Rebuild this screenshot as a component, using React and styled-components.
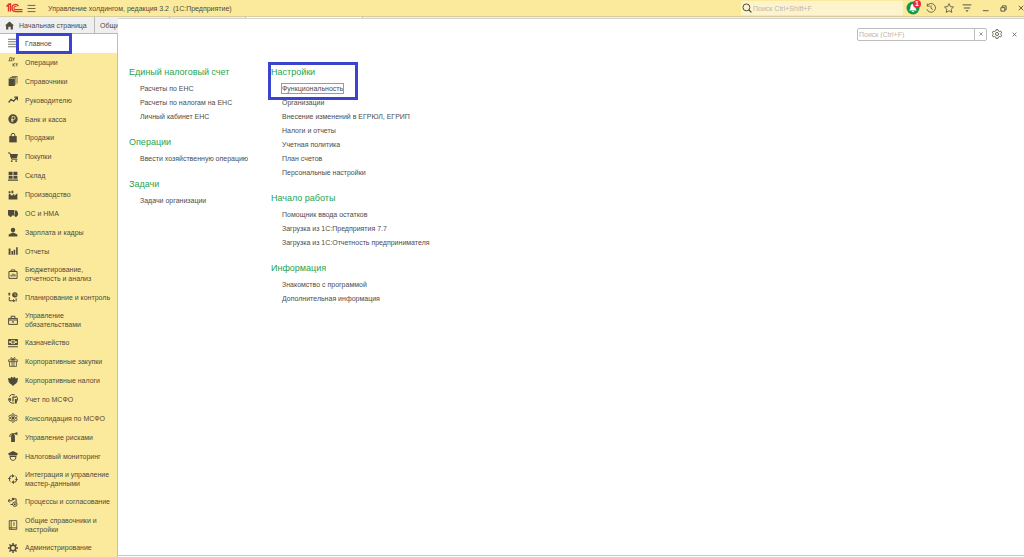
import React, { useState } from 'react';
import styled, { createGlobalStyle, css } from 'styled-components';

const GlobalStyle = createGlobalStyle`
	* {
		box-sizing: border-box;
	}
	body {
		margin: 0;
		background: #fff;
		color: #4f4a3c;
		font-family: "Liberation Sans", Arial, sans-serif;
		font-size: 7px;
		line-height: 9px;
	}
	button,
	input {
		font: inherit;
		color: inherit;
		border: 0;
		margin: 0;
		padding: 0;
		background: none;
	}
	button {
		cursor: pointer;
	}
	ul {
		list-style: none;
		margin: 0;
		padding: 0;
	}
`;

const Page = styled.div`
	display: grid;
	grid-template-columns: 118px 1fr;
	grid-template-rows: 17px 17px 1fr;
	min-height: 100vh;
`;

const TitleBar = styled.header`
	grid-column: 1 / -1;
	display: flex;
	align-items: center;
	padding-left: 6px;
	background: #fbea9b;
	border-bottom: 1px solid #d9cf9e;
`;

const Title = styled.h1`
	flex: 1;
	margin: 0 0 0 8px;
	font-size: 7px;
	font-weight: 400;
	white-space: pre;
`;

const GlobalSearch = styled.label`
	display: flex;
	align-items: center;
	width: 162px;
	height: 14px;
	padding-left: 1px;
	margin-right: 1px;
	background: #fdf4cd;
	border-radius: 1px;
`;

const SearchInput = styled.input`
	flex: 1;
	min-width: 0;
	height: 100%;
	padding-left: 1px;
	outline: none;
	&::placeholder {
		color: #b9b7ae;
		opacity: 1;
	}
`;

const IconButton = styled.button`
	position: relative;
	display: flex;
	align-items: center;
	justify-content: ${props => (props.$end ? 'flex-end' : 'center')};
	width: ${props => props.$width || 18}px;
	height: 16px;
	color: #5b5748;
`;

const Badge = styled.span`
	position: absolute;
	top: 0;
	right: 1px;
	width: 8px;
	height: 8px;
	border-radius: 50%;
	background: #ee2a2f;
	color: #fff;
	font-size: 7px;
	font-weight: 700;
	line-height: 8px;
	text-align: center;
`;

const Tabs = styled.nav`
	grid-column: 1 / -1;
	grid-row: 2;
	display: flex;
	background: #efefef;
	border-bottom: 1px solid #b9b9b9;
`;

const Tab = styled.button`
	display: flex;
	align-items: center;
	gap: 5px;
	flex: none;
	width: ${props => props.$width}px;
	padding-left: 5px;
	border-right: 1px solid #b9b9b9;
	background: ${props => (props.$active ? '#fff' : 'none')};
	white-space: nowrap;
	overflow: hidden;
`;

const Sidebar = styled.ul`
	grid-column: 1;
	grid-row: 3;
	display: flex;
	flex-direction: column;
	background: #fbea9b;
	border-right: 1px solid #c9c19a;
`;

const SidebarItem = styled.li`
	position: relative;
	flex: 1 0 auto;
	display: flex;
	background: ${props => (props.$active ? '#fff' : 'none')};
`;

const SidebarButton = styled.button`
	flex: 1;
	display: flex;
	align-items: center;
	gap: 7px;
	padding-left: 8px;
	text-align: left;
	white-space: pre;
`;

const Panel = styled.main`
	grid-column: 2;
	grid-row: 2 / 4;
	z-index: 1;
	margin: 1px 0;
	background: #fff;
	border-top: 1px solid #d4d4d4;
	border-bottom: 1px solid #c8c8c8;
`;

const PanelHeader = styled.div`
	display: flex;
	justify-content: flex-end;
	align-items: center;
	padding: 7px 2px 0 0;
`;

const PanelSearch = styled.div`
	display: flex;
	width: 130px;
	height: 13px;
	margin-right: 1px;
	border: 1px solid #bdbdbd;
	border-radius: 2px;
`;

const ClearButton = styled.button`
	display: flex;
	align-items: center;
	justify-content: center;
	width: 12px;
	border-left: 1px solid #bdbdbd;
	color: #555;
`;

const Columns = styled.div`
	display: grid;
	grid-template-columns: 120px 1fr;
	column-gap: 22px;
	padding: 20px 11px 0;
`;

const Section = styled.section`
	position: relative;
	padding-top: 2px;
	margin-bottom: 9px;
`;

const SectionTitle = styled.h2`
	margin: 0;
	font-size: 9px;
	font-weight: 400;
	line-height: 17px;
	color: #1fa351;
`;

const LinkRow = styled.li`
	display: flex;
	align-items: center;
	height: 14px;
	padding-left: 10px;
`;

const SectionLink = styled.a`
	padding: 1px;
	color: #4c4c4c;
	text-decoration: none;
	white-space: nowrap;
	${props =>
		props.$focused &&
		css`
			outline: 1px solid #9a9a9a;
			outline-offset: -1px;
		`};
`;

const Highlight = styled.span`
	position: absolute;
	border: 3px solid #3c44cf;
	pointer-events: none;
	${props =>
		props.$area === 'menu'
			? 'top: -1px; bottom: -1px; left: 16px; width: 56px;'
			: 'top: 0; left: -3px; width: 90px; height: 38px;'};
`;

const Svg = ({ size = 10, children, ...rest }) => (
	<svg
		width={size}
		height={size}
		viewBox="0 0 16 16"
		fill="none"
		stroke="currentColor"
		strokeWidth="1.6"
		aria-hidden="true"
		{...rest}
	>
		{children}
	</svg>
);

const solid = { fill: 'currentColor', stroke: 'none' };

const icons = {
	list: <path d="M0 2h16M0 6h16M0 10h16M0 14h16" strokeWidth="1.2" />,
	debit: (
		<path d="M1 6h6M2 6l1-5h3v5M7 2h4M9 2v4M8 10v5M11.500 10L8 12.500l3.500 2.500M12 11h4M14 11v4" strokeWidth="1.2" />
	),
	books: (
		<g {...solid}>
			<path d="M1 4h10v12H1z" />
			<path d="M3 2h10v12h-1V3H3zM6 0h9v12h-1V1H6z" />
		</g>
	),
	trend: <path d="M1 12l4-5 4 3 5-6M10 3.500h5v5" strokeWidth="2" />,
	ruble: (
		<g>
			<circle cx="8" cy="8" r="7.500" {...solid} />
			<path d="M6.500 13V4h2.500a2.300 2.300 0 0 1 0 4.800H5M5 11h4" stroke="#fbea9b" strokeWidth="1.300" />
		</g>
	),
	bag: (
		<g>
			<path d="M2 5h12v10H2z" {...solid} />
			<path d="M5 8V3.500a3 3 0 0 1 6 0V8" />
		</g>
	),
	cart: (
		<g>
			<path d="M3 3h13l-2 7H5z" {...solid} />
			<path d="M0 1.500h3l3 10h9" />
			<circle cx="6" cy="14.500" r="1.500" {...solid} />
			<circle cx="13" cy="14.500" r="1.500" {...solid} />
		</g>
	),
	store: <path d="M1 1h6.300v5.500H1zM8.700 1h6.300v5.500H8.700zM1 7.500h6.300v5H1zM8.700 7.500h6.300v5H8.700zM0 13.500h16v2H0z" {...solid} />,
	factory: (
		<path d="M1 15V7l2-1 3 3 4-3v3l5-4v10zM1 2h3v3H1zM5.500 1h3v4h-3z" {...solid} />
	),
	truck: (
		<g {...solid}>
			<path d="M0 3h10v9H0zM11 4h3l2 3.500V12h-5z" />
			<circle cx="4" cy="12" r="2.200" />
			<circle cx="12.500" cy="12" r="2.200" />
		</g>
	),
	person: (
		<g {...solid}>
			<path d="M8 1a3.500 3.500 0 0 1 3.500 3.500C11.500 7 10 9 8 9S4.500 7 4.500 4.500A3.500 3.500 0 0 1 8 1z" />
			<path d="M1 15v-3l5-2.500h4l5 2.500v3z" />
		</g>
	),
	bars: <path d="M1 4h3v10H1zM5.500 8h2.500v6H5.500zM9 6h2.500v8H9zM13 2h2.500v12H13z" {...solid} />,
	budget: (
		<g>
			<path d="M1.500 4h13v11h-13zM5 4V1.500h6V4" />
			<path d="M5 12V9M8 12V7M11 12V8.500" strokeWidth="1.800" />
		</g>
	),
	plan: (
		<g>
			<path d="M2 1v5M0 3h4M2 8v6h8M8 12l3 2-3 2M13 10v5" />
			<circle cx="11" cy="4.500" r="4.300" {...solid} />
			<path d="M11 2v3h2.500" stroke="#fbea9b" strokeWidth="1" />
		</g>
	),
	briefcase: (
		<g>
			<path d="M1 5.500h14v9.500H1zM5 5V2h6v3M1 8h14" />
			<path d="M6.500 10h3v2h-3z" {...solid} />
		</g>
	),
	money: (
		<g>
			<path d="M1 2.500h14v8H1zM0 14h16" />
			<path d="M1 2h4v3H1zM11 2h4v3h-4zM1 8h4v3H1zM11 8h4v3h-4z" {...solid} />
			<circle cx="8" cy="6.500" r="1.800" />
		</g>
	),
	gift: (
		<path d="M1 4.500h14v3H1zM2.500 7.500V15h11V7.500M6.500 4.500V15M9.500 4.500V15M8 4C3 4 4 0 6 1l2 3 2-3c2-1 3 3-2 3z" strokeWidth="1.300" />
	),
	eagle: (
		<path d="M0 3l4 1 1-3 2 1 1 2 1-2 2-1 1 3 4-1-1 6-2 3-2 1-3 3-3-3-2-1-2-3z" {...solid} />
	),
	globe: (
		<g>
			<path d="M2 4a7 7 0 0 1 9-2.500M1 7a7 7 0 0 0 9 7.500M13 3a7 7 0 0 1 0 10" />
			<path d="M7 4h6v2H9v6H7zM11 8h3v7h-3zM2 6l3 1v4l-3-1z" {...solid} />
		</g>
	),
	atom: (
		<g strokeWidth="1.300">
			<circle cx="8" cy="8" r="2" {...solid} />
			<circle cx="8" cy="3" r="2" />
			<circle cx="8" cy="13" r="2" />
			<circle cx="3.500" cy="5.500" r="2" />
			<circle cx="12.500" cy="5.500" r="2" />
			<circle cx="3.500" cy="10.500" r="2" />
			<circle cx="12.500" cy="10.500" r="2" />
		</g>
	),
	extinguisher: (
		<g>
			<path d="M5 5h6v11H5zM6 2h4v3H6zM10 2l5-2v5l-5-2z" {...solid} />
			<path d="M6 3C3 3 3 6 3 8" />
		</g>
	),
	officer: (
		<g>
			<path d="M0 4l8-4 8 4-2 3H2zM3 8h10v1.500H3z" {...solid} />
			<path d="M3.500 8v3c1 3 2.500 4 4.500 4s3.500-1 4.500-4V8" />
		</g>
	),
	sync: (
		<g>
			<path d="M7 3H5.500A3 3 0 0 0 2.500 6v4a3 3 0 0 0 1.500 2.500M9 13h1.500a3 3 0 0 0 3-3V6A3 3 0 0 0 12 3.500" />
			<path d="M6.500 0l4 3-4 3zM9.500 10l-4 3 4 3z" {...solid} />
			<path d="M0 8l2.500-2.500L5 8M11 8l2.500 2.500L16 8" strokeWidth="1.200" />
		</g>
	),
	process: (
		<g>
			<path d="M0 6h7M3 3L0 6l3 3M8 3h5v5M8 12H4" />
			<circle cx="8" cy="3" r="2" {...solid} />
			<circle cx="11" cy="11.500" r="3.500" />
			<circle cx="11" cy="11.500" r="1.500" {...solid} />
		</g>
	),
	catalog: <path d="M2 1h12v14H2zM5 1v14M8 5h3M8 8h3M2 12.500h12" strokeWidth="1.400" />,
	gear: (
		<g>
			<circle cx="8" cy="8" r="4.300" strokeWidth="2.400" />
			<path
				d="M8 0v3M8 13v3M0 8h3M13 8h3M2.300 2.300l2.200 2.200M11.500 11.500l2.200 2.200M2.300 13.700l2.200-2.200M11.500 4.500l2.200-2.200"
				strokeWidth="2.400"
			/>
		</g>
	)
};

const menu = [
	['list', 'Главное'],
	['debit', 'Операции'],
	['books', 'Справочники'],
	['trend', 'Руководителю'],
	['ruble', 'Банк и касса'],
	['bag', 'Продажи'],
	['cart', 'Покупки'],
	['store', 'Склад'],
	['factory', 'Производство'],
	['truck', 'ОС и НМА'],
	['person', 'Зарплата и кадры'],
	['bars', 'Отчеты'],
	['budget', 'Бюджетирование,\nотчетность и анализ'],
	['plan', 'Планирование и контроль'],
	['briefcase', 'Управление\nобязательствами'],
	['money', 'Казначейство'],
	['gift', 'Корпоративные закупки'],
	['eagle', 'Корпоративные налоги'],
	['globe', 'Учет по МСФО'],
	['atom', 'Консолидация по МСФО'],
	['extinguisher', 'Управление рисками'],
	['officer', 'Налоговый мониторинг'],
	['sync', 'Интеграция и управление\nмастер-данными'],
	['process', 'Процессы и согласование'],
	['catalog', 'Общие справочники и\nнастройки'],
	['gear', 'Администрирование']
];

const columns = [
	[
		{
			title: 'Единый налоговый счет',
			links: ['Расчеты по ЕНС', 'Расчеты по налогам на ЕНС', 'Личный кабинет ЕНС']
		},
		{ title: 'Операции', links: ['Ввести хозяйственную операцию'] },
		{ title: 'Задачи', links: ['Задачи организации'] }
	],
	[
		{
			title: 'Настройки',
			highlighted: true,
			links: [
				'Функциональность',
				'Организации',
				'Внесение изменений в ЕГРЮЛ, ЕГРИП',
				'Налоги и отчеты',
				'Учетная политика',
				'План счетов',
				'Персональные настройки'
			]
		},
		{
			title: 'Начало работы',
			links: [
				'Помощник ввода остатков',
				'Загрузка из 1С:Предприятия 7.7',
				'Загрузка из 1С:Отчетность предпринимателя'
			]
		},
		{
			title: 'Информация',
			links: ['Знакомство с программой', 'Дополнительная информация']
		}
	]
];

const Logo = () => (
	<svg width="17" height="10" viewBox="0 0 34 20" fill="none" stroke="#e0352b" aria-hidden="true">
		<path d="M1 7l4-4v14M5 3l4-1v15" strokeWidth="2.800" />
		<path d="M25 6.500A7 7 0 1 0 19 17h14" strokeWidth="2.800" />
		<path d="M21 8a3 3 0 1 0-2 5h14" strokeWidth="2.200" />
	</svg>
);

const Bell = () => (
	<svg width="14" height="14" viewBox="0 0 28 28" aria-hidden="true">
		<circle cx="14" cy="14" r="13" fill="#12994a" />
		<path d="M14 6c4 0 5 3 5 6 0 4 1 5 3 7H6c2-2 3-3 3-7 0-3 1-6 5-6zM11 20h6l-3 3z" fill="#fff" />
	</svg>
);

const CloseIcon = ({ size = 6 }) => (
	<Svg size={size}>
		<path d="M2 2l12 12M14 2L2 14" strokeWidth="2.500" />
	</Svg>
);

export default function App() {
	const [section, setSection] = useState('Главное');
	const [query, setQuery] = useState('');

	return (
		<Page>
			<GlobalStyle />
			<TitleBar>
				<Logo />
				<IconButton $width={17} aria-label="Меню">
					<Svg size={9}>
						<path d="M1 2.500h14M1 8h14M1 13.500h14" />
					</Svg>
				</IconButton>
				<Title>{'Управление холдингом, редакция 3.2  (1С:Предприятие)'}</Title>
				<GlobalSearch>
					<Svg>
						<circle cx="7" cy="7" r="5.500" />
						<path d="M11 11l4 4" strokeWidth="2.200" />
					</Svg>
					<SearchInput placeholder="Поиск Ctrl+Shift+F" aria-label="Поиск" />
				</GlobalSearch>
				<IconButton aria-label="Уведомления">
					<Bell />
					<Badge>1</Badge>
				</IconButton>
				<IconButton aria-label="История">
					<Svg>
						<path d="M2 4.500A7 7 0 1 1 1.500 10M2 1v4h4M8 4v4.500l3 2" strokeWidth="1.400" />
					</Svg>
				</IconButton>
				<IconButton aria-label="Избранное">
					<Svg>
						<path d="M8 1l2.200 4.800 5 .600-3.700 3.500 1 5.100L8 12.500 3.500 15l1-5.100L.800 6.400l5-.600z" strokeWidth="1.400" />
					</Svg>
				</IconButton>
				<IconButton aria-label="Сервис">
					<Svg>
						<path d="M1 3h14M3 8h10" />
						<path d="M5.500 11.500h5L8 14.500z" {...solid} />
					</Svg>
				</IconButton>
				<IconButton aria-label="Свернуть">
					<Svg size={7}>
						<path d="M2 13h13" strokeWidth="2.200" />
					</Svg>
				</IconButton>
				<IconButton aria-label="Восстановить">
					<Svg size={7}>
						<path d="M2 6h9v8H2zM5 5V2h9v9h-3" strokeWidth="2.200" />
					</Svg>
				</IconButton>
				<IconButton $width={12} $end aria-label="Закрыть">
					<CloseIcon />
				</IconButton>
			</TitleBar>

			<Tabs>
				<Tab $width={95}>
					<Svg size={9}>
						<path d="M8 1l8 7h-2v7h-4v-5H6v5H2V8H0z" {...solid} />
					</Svg>
					Начальная страница
				</Tab>
				<Tab $width={75}>Общие</Tab>
				<Tab $width={76} aria-label="Вкладка 3" />
				<Tab $width={117} $active aria-label="Вкладка 4" />
			</Tabs>

			<Sidebar>
				{menu.map(([icon, label]) => (
					<SidebarItem key={label} $active={label === section}>
						<SidebarButton onClick={() => setSection(label)}>
							<Svg>{icons[icon]}</Svg>
							{label}
						</SidebarButton>
						{icon === 'list' && <Highlight $area="menu" />}
					</SidebarItem>
				))}
			</Sidebar>

			<Panel>
				<PanelHeader>
					<PanelSearch>
						<SearchInput
							placeholder="Поиск (Ctrl+F)"
							aria-label="Поиск по разделу"
							value={query}
							onChange={e => setQuery(e.target.value)}
						/>
						<ClearButton aria-label="Очистить" onClick={() => setQuery('')}>
							<CloseIcon size={4} />
						</ClearButton>
					</PanelSearch>
					<IconButton aria-label="Настройка">
						<Svg>
							<circle cx="8" cy="8" r="2.500" strokeWidth="1.400" />
							<path
								d="M6.500 1h3l.500 2 2 1 2-.600 1.500 2.600-1.500 1.400v1.200l1.500 1.400-1.500 2.600-2-.600-2 1-.500 2h-3L6 13l-2-1-2 .600L.500 10 2 8.600V7.400L.500 6 2 3.400 4 4l2-1z"
								strokeWidth="1.400"
							/>
						</Svg>
					</IconButton>
					<IconButton $width={16} aria-label="Закрыть раздел">
						<CloseIcon size={5} />
					</IconButton>
				</PanelHeader>
				<Columns>
					{columns.map((sections, index) => (
						<div key={index}>
							{sections.map(({ title, links, highlighted }) => (
								<Section key={title}>
									<SectionTitle>{title}</SectionTitle>
									<ul>
										{links.map(link => (
											<LinkRow key={link}>
												<SectionLink href="#" $focused={link === 'Функциональность'}>
													{link}
												</SectionLink>
											</LinkRow>
										))}
									</ul>
									{highlighted && <Highlight />}
								</Section>
							))}
						</div>
					))}
				</Columns>
			</Panel>
		</Page>
	);
}
